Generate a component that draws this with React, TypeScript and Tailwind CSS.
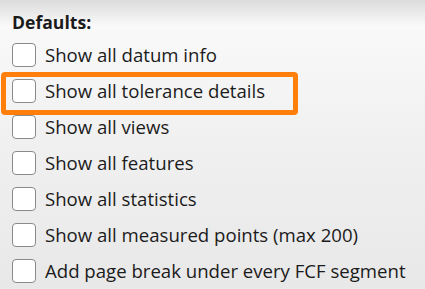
const items = [
  'Show all datum info',
  'Show all tolerance details',
  'Show all views',
  'Show all features',
  'Show all statistics',
  'Show all measured points (max 200)',
  'Add page break under every FCF segment',
]

const Box = () => (
  <span className="h-6 w-6 shrink-0 rounded-[4px] border border-[#8a8a8a] bg-white" />
)

export default function App() {
  return (
    <div className="h-[289px] w-[425px] overflow-hidden bg-[linear-gradient(to_bottom,#dcdcdc_0px,#f9f9f9_26px,#f1f1f1_130px,#e8e8e8_289px)] font-['Open_Sans',sans-serif] text-[#1b1b1b]">
      <div className="flex h-[37px] items-center pl-3 pt-[7px] text-[17.6px] font-bold">Defaults:</div>
      <div className="flex flex-col">
        {items.map((label, i) => (
          <div key={label} className="relative flex h-9 items-center gap-[9px] pl-3 text-[18.6px]">
            {i === 1 && (
              <span className="absolute -top-px left-px h-[43px] w-[297px] rounded-[4px] border-[5px] border-[#ff7f0a]" />
            )}
            <Box />
            <span className="whitespace-nowrap">{label}</span>
          </div>
        ))}
      </div>
    </div>
  )
}
